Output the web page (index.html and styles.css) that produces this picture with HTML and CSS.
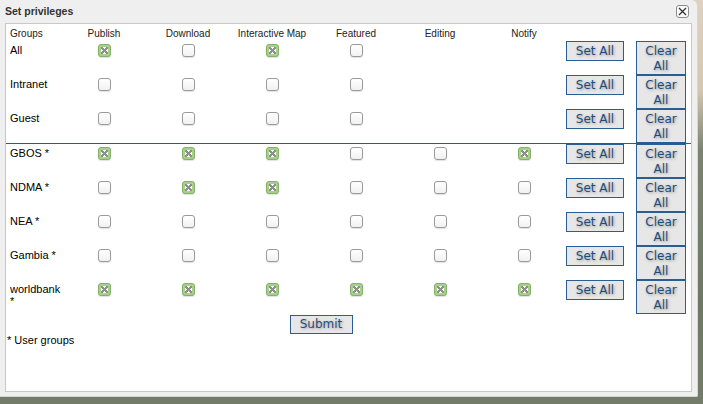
FILE: index.html
```html
<!DOCTYPE html>
<html>
<head>
<meta charset="utf-8">
<title>Set privileges</title>
<link rel="stylesheet" href="styles.css">
</head>
<body>
<div class="dialog">
  <div class="titlebar">
    <span class="title">Set privileges</span>
    <span class="close"><svg width="11" height="11" viewBox="0 0 11 11"><path d="M2 2L9 9M9 2L2 9" stroke="#333" stroke-width="1.3" fill="none"/></svg></span>
  </div>
  <div class="panel">
    <div class="row head">
      <div class="grp">Groups</div>
      <div class="c">Publish</div>
      <div class="c">Download</div>
      <div class="c">Interactive Map</div>
      <div class="c">Featured</div>
      <div class="c">Editing</div>
      <div class="c">Notify</div>
      <div></div><div></div>
    </div>

    <div class="row">
      <div class="grp">All</div>
      <div class="c"><span class="cb on"></span></div>
      <div class="c"><span class="cb"></span></div>
      <div class="c"><span class="cb on"></span></div>
      <div class="c"><span class="cb"></span></div>
      <div class="c"></div>
      <div class="c"></div>
      <div><button class="btn set">Set All</button></div>
      <div><button class="btn clear">Clear All</button></div>
    </div>

    <div class="row">
      <div class="grp">Intranet</div>
      <div class="c"><span class="cb"></span></div>
      <div class="c"><span class="cb"></span></div>
      <div class="c"><span class="cb"></span></div>
      <div class="c"><span class="cb"></span></div>
      <div class="c"></div>
      <div class="c"></div>
      <div><button class="btn set">Set All</button></div>
      <div><button class="btn clear">Clear All</button></div>
    </div>

    <div class="row sep">
      <div class="grp">Guest</div>
      <div class="c"><span class="cb"></span></div>
      <div class="c"><span class="cb"></span></div>
      <div class="c"><span class="cb"></span></div>
      <div class="c"><span class="cb"></span></div>
      <div class="c"></div>
      <div class="c"></div>
      <div><button class="btn set">Set All</button></div>
      <div><button class="btn clear">Clear All</button></div>
    </div>

    <div class="row">
      <div class="grp">GBOS *</div>
      <div class="c"><span class="cb on"></span></div>
      <div class="c"><span class="cb on"></span></div>
      <div class="c"><span class="cb on"></span></div>
      <div class="c"><span class="cb"></span></div>
      <div class="c"><span class="cb"></span></div>
      <div class="c"><span class="cb on"></span></div>
      <div><button class="btn set">Set All</button></div>
      <div><button class="btn clear">Clear All</button></div>
    </div>

    <div class="row">
      <div class="grp">NDMA *</div>
      <div class="c"><span class="cb"></span></div>
      <div class="c"><span class="cb on"></span></div>
      <div class="c"><span class="cb on"></span></div>
      <div class="c"><span class="cb"></span></div>
      <div class="c"><span class="cb"></span></div>
      <div class="c"><span class="cb"></span></div>
      <div><button class="btn set">Set All</button></div>
      <div><button class="btn clear">Clear All</button></div>
    </div>

    <div class="row">
      <div class="grp">NEA *</div>
      <div class="c"><span class="cb"></span></div>
      <div class="c"><span class="cb"></span></div>
      <div class="c"><span class="cb"></span></div>
      <div class="c"><span class="cb"></span></div>
      <div class="c"><span class="cb"></span></div>
      <div class="c"><span class="cb"></span></div>
      <div><button class="btn set">Set All</button></div>
      <div><button class="btn clear">Clear All</button></div>
    </div>

    <div class="row">
      <div class="grp">Gambia *</div>
      <div class="c"><span class="cb"></span></div>
      <div class="c"><span class="cb"></span></div>
      <div class="c"><span class="cb"></span></div>
      <div class="c"><span class="cb"></span></div>
      <div class="c"><span class="cb"></span></div>
      <div class="c"><span class="cb"></span></div>
      <div><button class="btn set">Set All</button></div>
      <div><button class="btn clear">Clear All</button></div>
    </div>

    <div class="row">
      <div class="grp">worldbank *</div>
      <div class="c"><span class="cb on"></span></div>
      <div class="c"><span class="cb on"></span></div>
      <div class="c"><span class="cb on"></span></div>
      <div class="c"><span class="cb on"></span></div>
      <div class="c"><span class="cb on"></span></div>
      <div class="c"><span class="cb on"></span></div>
      <div><button class="btn set">Set All</button></div>
      <div><button class="btn clear">Clear All</button></div>
    </div>

    <div class="submit-row"><button class="btn submit">Submit</button></div>
    <div class="note">* User groups</div>
  </div>
</div>
</body>
</html>
```

FILE: styles.css
```css
html, body {
  margin: 0;
  padding: 0;
}
body {
  width: 703px;
  height: 404px;
  overflow: hidden;
  background: linear-gradient(to bottom, #ddd2bf 0, #d4c7b0 90px, #7c8471 150px, #6f7865 300px, #737b69 100%);
  font-family: "Liberation Sans", Arial, sans-serif;
}
.dialog {
  width: 698px;
  height: 397px;
  box-sizing: border-box;
  background: #efefef;
  border-right: 1px solid #d6d6d6;
  border-bottom: 1px solid #d6d6d6;
  border-radius: 0 6px 2px 0;
  padding: 0 5px 0 5px;
}
.titlebar {
  height: 23px;
  display: flex;
  align-items: flex-start;
  justify-content: space-between;
}
.title {
  font-family: "Liberation Sans Narrow", "Arial Narrow", "Liberation Sans", sans-serif;
  font-weight: bold;
  font-size: 10.5px;
  color: #333;
  margin-top: 5px;
  line-height: 12px;
}
.close {
  width: 13px;
  height: 13px;
  margin-top: 5px;
  margin-right: 3px;
  box-sizing: border-box;
  border: 1px solid #8d8d8d;
  border-radius: 3px;
  background: #fafafa;
  display: flex;
  align-items: center;
  justify-content: center;
}
.close svg { display: block; }
.panel {
  background: #fff;
  border: 1px solid #c8c8c8;
  height: 369px;
  box-sizing: border-box;
  padding-top: 4px;
}
.row {
  display: grid;
  grid-template-columns: 52px repeat(6, 84px) 70px 56px;
  padding-left: 4px;
  height: 34px;
  align-items: start;
}
.row.head {
  height: 13px;
  font-size: 10px;
  line-height: 12px;
  color: #222;
}
.row.sep {
  border-bottom: 1px solid #2d5b88;
}
.grp {
  font-size: 11px;
  line-height: 12px;
  color: #000;
  padding-top: 3px;
}
.row.head .grp {
  font-size: 10px;
  padding-top: 0;
  color: #222;
}
.c {
  display: flex;
  justify-content: center;
  white-space: nowrap;
}
.cb {
  display: block;
  position: relative;
  width: 13px;
  height: 13px;
  margin-top: 3px;
  box-sizing: border-box;
  border: 1px solid #9a9a9a;
  border-radius: 3px;
  background: linear-gradient(to bottom, #ffffff, #f1f1f1);
  box-shadow: 0 1px 1px rgba(0,0,0,0.12);
}
.cb.on {
  background: #a7d08a;
  border-color: #86b06a;
}
.cb.on::before {
  content: "";
  position: absolute;
  left: 2px;
  top: 2px;
  width: 7px;
  height: 7px;
  background:
    linear-gradient(45deg, transparent 40%, #8e8e8e 40%, #8e8e8e 60%, transparent 60%),
    linear-gradient(-45deg, transparent 40%, #8e8e8e 40%, #8e8e8e 60%, transparent 60%),
    #fff;
}
.btn {
  font-family: "DejaVu Sans", Verdana, sans-serif;
  font-size: 12px;
  color: #1d4c7c;
  background: #e7e7e7;
  border: 1px solid #2a5e92;
  border-radius: 0;
  margin: 0;
  text-shadow: 1px 1px 3px rgba(0,0,0,0.35);
  box-sizing: border-box;
  cursor: pointer;
}
.btn.set {
  display: block;
  width: 58px;
  height: 20px;
  padding: 0;
  line-height: 16px;
}
.btn.clear {
  display: block;
  width: 50px;
  height: 34px;
  padding: 2px 0 0;
  line-height: 15px;
  white-space: normal;
}
.submit-row {
  width: 630px;
  display: flex;
  justify-content: center;
  padding-top: 1px;
}
.btn.submit {
  width: 63px;
  height: 19px;
  padding: 0;
  line-height: 15px;
}
.note {
  font-size: 11px;
  line-height: 13px;
  color: #000;
  padding-left: 1px;
  margin-top: 0;
}
```
